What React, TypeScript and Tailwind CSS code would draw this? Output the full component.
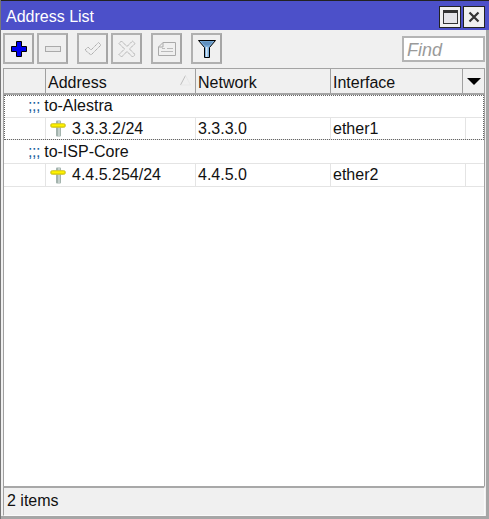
const font = { fontFamily: '"Liberation Sans", Arial, sans-serif' }

function ToolButton({ children, className = '' }: { children: React.ReactNode; className?: string }) {
  return (
    <div className={`w-[31px] h-[31px] border-2 border-[#b0b0b0] border-r-[#a6a6a6] bg-[#f0f0f0] flex items-center justify-center ${className}`}>
      {children}
    </div>
  )
}

function AddressIcon() {
  return (
    <svg width="16" height="17" viewBox="0 0 16 17" className="shrink-0">
      <rect x="6" y="0.5" width="5" height="16" rx="1" fill="#a3b3ad" />
      <rect x="8" y="1" width="2" height="15" fill="#c4d0cc" />
      <rect x="0.5" y="3.5" width="15" height="4" rx="2" fill="#e6da00" stroke="#cfc53c" strokeWidth="0.8" />
      <rect x="2" y="4.5" width="12" height="1.5" fill="#fff200" />
    </svg>
  )
}

const groups = [
  { comment: 'to-Alestra', address: '3.3.3.2/24', network: '3.3.3.0', iface: 'ether1', focused: true },
  { comment: 'to-ISP-Core', address: '4.4.5.254/24', network: '4.4.5.0', iface: 'ether2', focused: false },
]

export default function App() {
  return (
    <div className="w-[489px] h-[519px] flex flex-col bg-[#f0f0f0] text-[16px] leading-[20px] text-[#111] overflow-hidden border-l border-[#777]" style={font}>
      {/* title bar */}
      <div className="h-[30px] shrink-0 bg-[#4c50c9] border-t border-[#222] flex items-center justify-between pl-[5px] pr-[4px] -ml-px">
        <span className="text-white pl-px pt-[3px]">Address List</span>
        <div className="flex gap-[2px] pt-[2px]">
          <div className="w-[22px] h-[22px] bg-[#f0f0f0] border border-[#222] flex items-center justify-center">
            <div className="w-[15px] h-[14px] border border-[#333] border-t-[3px] bg-[#e4e4e8]"></div>
          </div>
          <div className="w-[22px] h-[22px] bg-[#f0f0f0] border border-[#222] flex items-center justify-center">
            <svg width="12" height="12" viewBox="0 0 12 12">
              <path d="M1.5 1.5 L10.5 10.5 M10.5 1.5 L1.5 10.5" stroke="#333" strokeWidth="2.2" />
            </svg>
          </div>
        </div>
      </div>

      <div className="flex-1 min-h-0 flex flex-col border-r-[3px] border-b-[3px] border-[#a6a6a6]">
        {/* toolbar */}
        <div className="h-[38px] shrink-0 flex items-center pl-[2px] pr-[1px] pb-[1px]">
          <ToolButton>
            <svg width="16" height="16" viewBox="0 0 16 16">
              <path d="M5.5 .5 H10.5 V5.5 H15.5 V10.5 H10.5 V15.5 H5.5 V10.5 H.5 V5.5 H5.5 Z" fill="#0000f0" stroke="#000" strokeWidth="1" />
            </svg>
          </ToolButton>
          <ToolButton className="ml-[3px]">
            <svg width="16" height="6" viewBox="0 0 16 6">
              <rect x=".5" y=".5" width="15" height="5" fill="#e8e8e8" stroke="#aaa" />
            </svg>
          </ToolButton>
          <ToolButton className="ml-[9px]">
            <svg width="18" height="16" viewBox="0 0 18 16">
              <path d="M1 9 L4 6 L7 9 L14.5 1.5 L17 4 L7 14 Z" fill="#f0f0f0" stroke="#aaa" strokeDasharray="1.5 .5" />
            </svg>
          </ToolButton>
          <ToolButton className="ml-[3px]">
            <svg width="18" height="18" viewBox="0 0 18 18">
              <path d="M1 3.5 L3.5 1 L9 6.5 L14.5 1 L17 3.5 L11.5 9 L17 14.5 L14.5 17 L9 11.5 L3.5 17 L1 14.5 L6.5 9 Z" fill="#f0f0f0" stroke="#aaa" strokeDasharray="1.5 .5" />
            </svg>
          </ToolButton>
          <ToolButton className="ml-[9px]">
            <svg width="18" height="14" viewBox="0 0 18 14">
              <path d="M.5 13.5 V5 L5 .5 H17.5 V13.5 Z M.5 5 H5 V.5" fill="#f0f0f0" stroke="#aaa" />
              <path d="M4 6.5 H7 M9 6.5 H15 M3 9.5 H15" stroke="#bbb" />
            </svg>
          </ToolButton>
          <ToolButton className="ml-[9px]">
            <svg width="18" height="18" viewBox="0 0 18 18">
              <path d="M.5 .5 H17.5 L11.5 7.5 V17.5 H6.5 V7.5 Z" fill="#7fb0dc" stroke="#000" strokeWidth="1" />
              <path d="M3 1.5 H15 L11 5.5 H7 Z" fill="#5f8fbe" />
              <rect x="8" y="7" width="1.5" height="10" fill="#d6e6f4" />
            </svg>
          </ToolButton>
          <div className="ml-auto w-[83px] h-[26px] border-2 border-[#b4b4b4] bg-white flex items-center pl-[3px] pt-[2px] italic text-[#9a9a9a] text-[18px]">
            Find
          </div>
        </div>

        {/* table */}
        <div className="flex-1 min-h-0 ml-[2px] mr-[1px] border-l border-r border-[#a0a0a0] bg-white flex flex-col">
          <div className="h-[27px] shrink-0 grid grid-cols-[42px_150px_135px_132px_1fr] bg-[#f0f0f0] border-t border-b-2 border-[#a4a4a4]">
            <div className="border-r border-[#a0a0a0]"></div>
            <div className="border-r border-[#a0a0a0] pl-[2px] pt-[3px] flex items-center justify-between pr-[4px]">
              <span>Address</span>
              <svg width="11" height="11" viewBox="0 0 11 11" className="-mt-[5px]">
                <path d="M5.5 .5 L.5 10" fill="none" stroke="#b8b8b8" strokeWidth="0.9" />
                <path d="M5.5 .5 L10.5 10 H.5" fill="none" stroke="#e6e6e6" strokeWidth="0.9" />
              </svg>
            </div>
            <div className="border-r border-[#a0a0a0] pl-[2px] pt-[3px] flex items-center">Network</div>
            <div className="border-r border-[#a0a0a0] pl-[2px] pt-[3px] flex items-center">Interface</div>
            <div className="flex items-center justify-center">
              <svg width="14" height="7" viewBox="0 0 14 7"><path d="M0 0 H14 L7 7 Z" fill="#000" /></svg>
            </div>
          </div>

          <div className="flex-1 min-h-0">
            {groups.map((g) => (
              <div key={g.address} className={g.focused ? 'outline-1 outline-dotted outline-[#666] -outline-offset-1' : ''}>
                <div className={`${g.focused ? 'h-[22px]' : 'h-[23px]'} flex items-center pl-[24px] whitespace-pre`}>
                  <span className="text-[#1b5f9f] tracking-[-0.4px]">;;; </span>
                  <span>{g.comment}</span>
                </div>
                <div className={`${g.focused ? 'h-[23px]' : 'h-[24px]'} grid grid-cols-[42px_150px_135px_135px_1fr] border-t border-b border-[#e4e4e4]`}>
                  <div className="border-r border-[#e4e4e4]"></div>
                  <div className="border-r border-[#e4e4e4] pl-[4px] flex items-center gap-[6px]">
                    <AddressIcon />
                    <span>{g.address}</span>
                  </div>
                  <div className="border-r border-[#e4e4e4] pl-[2px] flex items-center">{g.network}</div>
                  <div className="border-r border-[#e4e4e4] pl-[2px] flex items-center">{g.iface}</div>
                  <div></div>
                </div>
              </div>
            ))}
          </div>
        </div>

        {/* status bar */}
        <div className="h-[30px] shrink-0 border-t-2 border-t-[#a8a8a8] border-l border-l-[#a0a0a0] border-r border-r-[#fafafa] border-b border-b-[#fafafa] mr-[1px] ml-[2px] pl-[3px] pb-[1px] flex items-center">
          2 items
        </div>
      </div>
    </div>
  )
}
